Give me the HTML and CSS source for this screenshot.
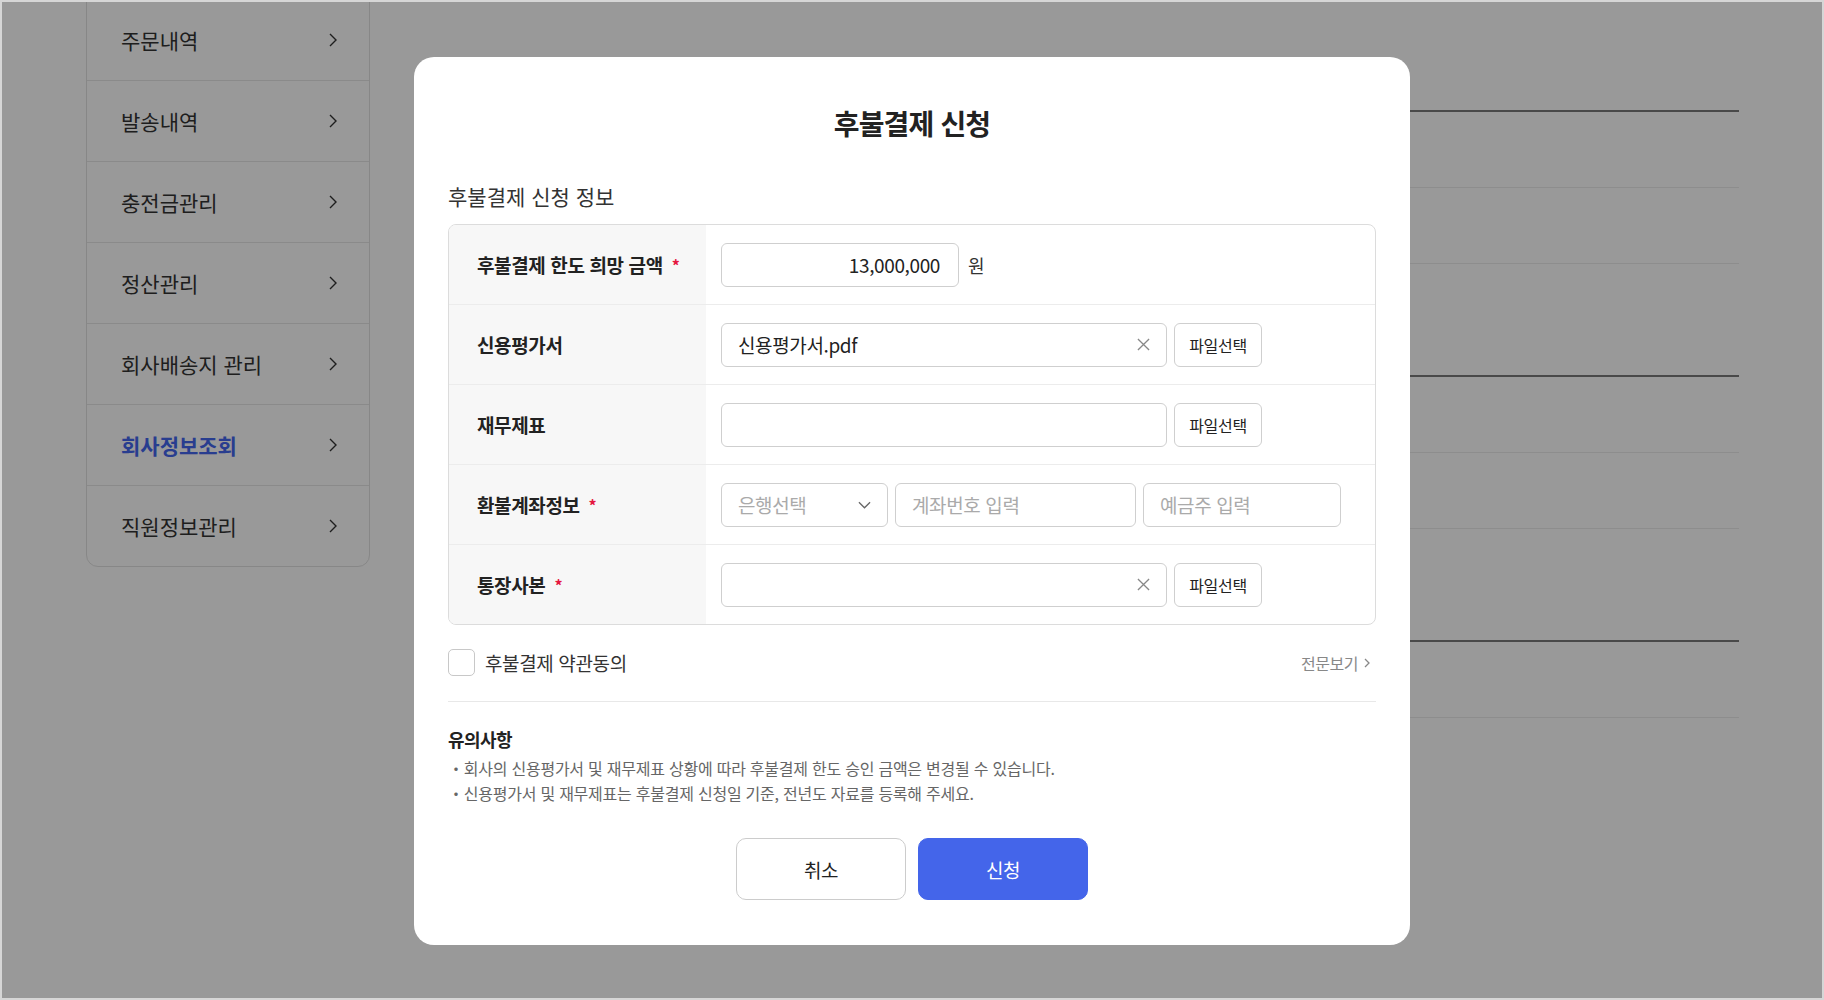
FILE: index.html
```html
<!DOCTYPE html>
<html lang="ko">
<head>
<meta charset="utf-8">
<title>후불결제 신청</title>
<link rel="stylesheet" href="styles.css">
</head>
<body>
<div class="frame">
  <div class="page">
    <nav class="sidebar">
      <a class="nav-item">주문내역<svg class="chev" viewBox="0 0 8 14"><path d="M1 1l6 6-6 6"/></svg></a>
      <a class="nav-item">발송내역<svg class="chev" viewBox="0 0 8 14"><path d="M1 1l6 6-6 6"/></svg></a>
      <a class="nav-item">충전금관리<svg class="chev" viewBox="0 0 8 14"><path d="M1 1l6 6-6 6"/></svg></a>
      <a class="nav-item">정산관리<svg class="chev" viewBox="0 0 8 14"><path d="M1 1l6 6-6 6"/></svg></a>
      <a class="nav-item">회사배송지 관리<svg class="chev" viewBox="0 0 8 14"><path d="M1 1l6 6-6 6"/></svg></a>
      <a class="nav-item active">회사정보조회<svg class="chev" viewBox="0 0 8 14"><path d="M1 1l6 6-6 6"/></svg></a>
      <a class="nav-item">직원정보관리<svg class="chev" viewBox="0 0 8 14"><path d="M1 1l6 6-6 6"/></svg></a>
    </nav>
    <main class="main">
      <section class="info-section">
        <h3 class="info-head">회사 기본정보</h3>
        <div class="info-table">
          <div class="info-row"></div>
          <div class="info-row"></div>
        </div>
      </section>
      <section class="info-section">
        <h3 class="info-head">결제 정보</h3>
        <div class="info-table">
          <div class="info-row"></div>
          <div class="info-row"></div>
        </div>
      </section>
      <section class="info-section">
        <h3 class="info-head">담당자 정보</h3>
        <div class="info-table">
          <div class="info-row"></div>
        </div>
      </section>
    </main>
  </div>

  <div class="overlay">
    <div class="modal">
      <h2 class="modal-title">후불결제 신청</h2>
      <p class="section-label">후불결제 신청 정보</p>

      <div class="form-table">
        <div class="form-row">
          <div class="form-label">후불결제 한도 희망 금액<span class="req">*</span></div>
          <div class="form-value">
            <div class="field w-amount amount">13,000,000</div>
            <span class="unit">원</span>
          </div>
        </div>
        <div class="form-row">
          <div class="form-label">신용평가서</div>
          <div class="form-value">
            <div class="field w-file">신용평가서.pdf
              <svg class="clear" viewBox="0 0 14 14"><path d="M1 1l12 12M13 1L1 13"/></svg>
            </div>
            <button class="file-btn">파일선택</button>
          </div>
        </div>
        <div class="form-row">
          <div class="form-label">재무제표</div>
          <div class="form-value">
            <div class="field w-file"></div>
            <button class="file-btn">파일선택</button>
          </div>
        </div>
        <div class="form-row">
          <div class="form-label">환불계좌정보<span class="req">*</span></div>
          <div class="form-value">
            <div class="field w-bank placeholder">은행선택
              <svg class="caret" viewBox="0 0 14 8"><path d="M1 1l6 6 6-6"/></svg>
            </div>
            <div class="field w-account placeholder">계좌번호 입력</div>
            <div class="field w-holder placeholder">예금주 입력</div>
          </div>
        </div>
        <div class="form-row">
          <div class="form-label">통장사본<span class="req">*</span></div>
          <div class="form-value">
            <div class="field w-file">
              <svg class="clear" viewBox="0 0 14 14"><path d="M1 1l12 12M13 1L1 13"/></svg>
            </div>
            <button class="file-btn">파일선택</button>
          </div>
        </div>
      </div>

      <div class="agree-row">
        <label class="agree">
          <span class="checkbox"></span>
          <span>후불결제 약관동의</span>
        </label>
        <a class="view-all">전문보기<svg class="small-chev" viewBox="0 0 6 10"><path d="M1 1l4 4-4 4"/></svg></a>
      </div>

      <div class="notice">
        <h4 class="notice-title">유의사항</h4>
        <ul class="notice-list">
          <li>회사의 신용평가서 및 재무제표 상황에 따라 후불결제 한도 승인 금액은 변경될 수 있습니다.</li>
          <li>신용평가서 및 재무제표는 후불결제 신청일 기준, 전년도 자료를 등록해 주세요.</li>
        </ul>
      </div>

      <div class="actions">
        <button class="btn btn-cancel">취소</button>
        <button class="btn btn-submit">신청</button>
      </div>
    </div>
  </div>
</div>
</body>
</html>
```

FILE: styles.css
```css
* { box-sizing: border-box; }

html, body {
  margin: 0;
  padding: 0;
}

body {
  font-family: "Noto Sans CJK KR", "Noto Sans", sans-serif;
  color: #222;
  background: #fff;
}

.frame {
  position: relative;
  width: 1824px;
  height: 1000px;
  border: 2px solid #d6d6d6;
  overflow: hidden;
  background: #fff;
}

.page {
  display: flex;
  align-items: flex-start;
  height: 100%;
}

/* Sidebar */
.sidebar {
  flex: none;
  width: 284px;
  margin-left: 84px;
  margin-top: -3px;
  border: 1px solid #e2e2e2;
  border-radius: 0 0 12px 12px;
  display: flex;
  flex-direction: column;
}

.nav-item {
  height: 81px;
  display: flex;
  align-items: center;
  justify-content: space-between;
  padding: 0 32px 0 34px;
  border-bottom: 1px solid #e6e6e6;
  font-size: 21px;
  color: #333;
}

.nav-item:last-child { border-bottom: none; height: 80px; }

.nav-item.active {
  color: #4466ee;
  font-weight: 700;
}

.chev {
  width: 8px;
  height: 14px;
  fill: none;
  stroke: #333;
  stroke-width: 1.4;
}

/* Main background content */
.main {
  flex: none;
  width: 1325px;
  margin-left: 44px;
  margin-top: -3px;
}

.info-head {
  height: 111px;
  margin: 0;
  font-size: 20px;
  font-weight: 700;
  color: #fff;
}

.info-table {
  border-top: 2px solid #7a7a7a;
}

.info-row {
  height: 76px;
  border-bottom: 1px solid #ececec;
}

/* Overlay + modal */
.overlay {
  position: absolute;
  inset: 0;
  background: rgba(0, 0, 0, 0.4);
  display: flex;
  align-items: center;
  justify-content: center;
}

.modal {
  width: 996px;
  height: 888px;
  margin-top: 2px;
  background: #fff;
  border-radius: 20px;
  padding: 45px 34px 45px;
  display: flex;
  flex-direction: column;
}

.modal-title {
  margin: 0;
  text-align: center;
  font-size: 28px;
  line-height: 42px;
  font-weight: 700;
  letter-spacing: -0.03em;
  color: #222;
}

.section-label {
  margin: 38px 0 0;
  font-size: 21px;
  line-height: 28px;
  color: #333;
}

.form-table {
  margin-top: 14px;
  border: 1px solid #dcdcdc;
  border-radius: 8px;
  overflow: hidden;
}

.form-row {
  display: grid;
  grid-template-columns: 257px 1fr;
  height: 80px;
  border-bottom: 1px solid #ececec;
}

.form-row:last-child {
  border-bottom: none;
  height: 79px;
}

.form-label {
  background: #f7f7f7;
  display: flex;
  align-items: center;
  padding-left: 28px;
  font-size: 19px;
  font-weight: 700;
  letter-spacing: -0.02em;
  color: #222;
}

.req {
  color: #e5173f;
  font-size: 16px;
  margin-left: 9px;
  font-weight: 700;
}

.form-value {
  display: flex;
  align-items: center;
  gap: 7px;
  padding-left: 15px;
}

.field {
  position: relative;
  height: 44px;
  border: 1px solid #cfcfcf;
  border-radius: 6px;
  display: flex;
  align-items: center;
  padding: 0 18px 0 16px;
  font-size: 19px;
  letter-spacing: -0.02em;
  color: #222;
}

.field.placeholder { color: #aaa; }

.w-amount { width: 238px; }
.amount { justify-content: flex-end; }
.w-file { width: 446px; }
.w-bank { width: 167px; justify-content: space-between; padding-right: 16px; }
.w-account { width: 241px; }
.w-holder { width: 198px; }

.unit {
  margin-left: 2px;
  font-size: 18px;
  color: #333;
}

.clear {
  position: absolute;
  right: 16px;
  top: 50%;
  width: 13px;
  height: 13px;
  margin-top: -6.5px;
  fill: none;
  stroke: #888;
  stroke-width: 1.4;
}

.caret {
  width: 13px;
  height: 8px;
  fill: none;
  stroke: #666;
  stroke-width: 1.4;
}

.file-btn {
  width: 88px;
  height: 44px;
  border: 1px solid #cfcfcf;
  border-radius: 6px;
  background: #fff;
  font-family: inherit;
  font-size: 16px;
  letter-spacing: -0.02em;
  color: #222;
  padding: 0;
}

.agree-row {
  margin-top: 24px;
  padding-bottom: 25px;
  border-bottom: 1px solid #e8e8e8;
  display: flex;
  align-items: center;
  justify-content: space-between;
}

.agree {
  display: flex;
  align-items: center;
  gap: 10px;
  font-size: 19px;
  letter-spacing: -0.02em;
  color: #333;
}

.checkbox {
  width: 27px;
  height: 27px;
  border: 1px solid #c8c8c8;
  border-radius: 5px;
  background: #fff;
}

.view-all {
  display: flex;
  align-items: center;
  gap: 6px;
  margin-right: 6px;
  font-size: 16px;
  letter-spacing: -0.03em;
  color: #888;
}

.small-chev {
  width: 6px;
  height: 10px;
  fill: none;
  stroke: #888;
  stroke-width: 1.3;
}

.notice {
  margin-top: 24px;
}

.notice-title {
  margin: 0;
  font-size: 18px;
  line-height: 26px;
  font-weight: 700;
  letter-spacing: -0.03em;
  color: #222;
}

.notice-list {
  list-style: none;
  margin: 4px 0 0;
  padding: 0;
  font-size: 16px;
  line-height: 25px;
  letter-spacing: -0.015em;
  color: #666;
}

.notice-list li::before {
  content: "・";
}

.actions {
  margin-top: auto;
  display: flex;
  justify-content: center;
  gap: 12px;
}

.btn {
  width: 170px;
  height: 62px;
  border-radius: 10px;
  font-family: inherit;
  font-size: 19px;
  letter-spacing: -0.02em;
}

.btn-cancel {
  background: #fff;
  border: 1px solid #cccccc;
  color: #222;
}

.btn-submit {
  background: #4465ea;
  border: 1px solid #4465ea;
  color: #fff;
}
```
